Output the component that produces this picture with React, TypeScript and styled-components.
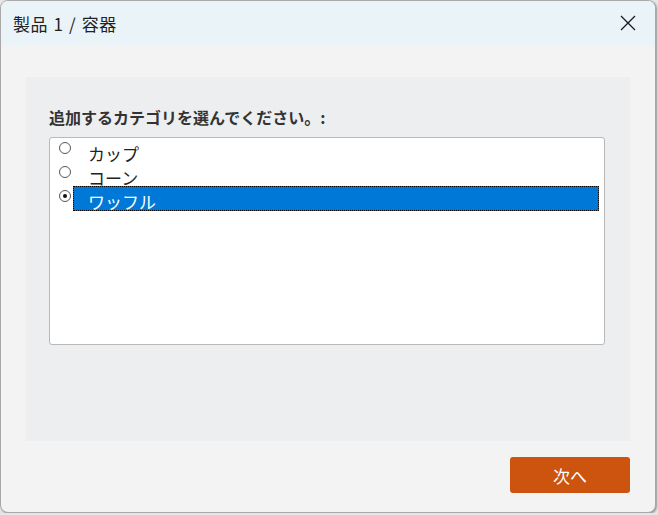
import React, { useState } from "react";
import styled, { createGlobalStyle } from "styled-components";

const Global = createGlobalStyle`
  html, body { margin: 0; padding: 0; background: #e6e6e6; }
  body { font-family: "Noto Sans CJK JP", "Noto Sans", sans-serif; }
  * { box-sizing: border-box; }
`;

const Window = styled.div`
  width: 656px;
  height: 513px;
  border: 1px solid #a8a8a8;
  border-radius: 8px;
  overflow: hidden;
  background: #f3f3f3;
  display: flex;
  flex-direction: column;
  box-shadow: 1px 1px 2px rgba(0, 0, 0, 0.35);
`;

const TitleBar = styled.div`
  height: 44px;
  flex: none;
  background: #eaf4f8;
  display: flex;
  align-items: center;
  justify-content: space-between;
  padding: 0 12px 0 12px;
`;

const Title = styled.div`
  font-size: 17px;
  color: #222;
  letter-spacing: 0.6px;
  word-spacing: 1px;
`;

const CloseButton = styled.button`
  border: none;
  background: transparent;
  padding: 0;
  width: 24px;
  height: 24px;
  display: flex;
  align-items: center;
  justify-content: center;
  margin-right: 3px;
`;

const Body = styled.div`
  flex: 1;
  display: flex;
  flex-direction: column;
  padding: 32px 25px 20px 25px;
`;

const Panel = styled.div`
  height: 364px;
  background: #eceef0;
  padding: 27px 25px 0 23px;
`;

const Label = styled.div`
  font-size: 16px;
  font-weight: bold;
  color: #333;
  line-height: 26px;
  margin-bottom: 7px;
`;

const ListBox = styled.div`
  height: 208px;
  background: #fff;
  border: 1px solid #b9b9b9;
  border-radius: 3px;
  padding: 0 5px 0 9px;
  display: flex;
  flex-direction: column;
`;

const Row = styled.div`
  display: flex;
  align-items: center;
  height: 24px;
`;

const Radio = styled.span<{ $checked: boolean }>`
  width: 12px;
  height: 12px;
  flex: none;
  border-radius: 50%;
  border: 1.5px solid #555;
  background: #fff;
  margin-top: -5px;
  display: flex;
  align-items: center;
  justify-content: center;
  &::after {
    content: "";
    width: 4px;
    height: 4px;
    border-radius: 50%;
    background: ${(p) => (p.$checked ? "#111" : "transparent")};
  }
`;

const ItemText = styled.span<{ $selected: boolean }>`
  flex: 1;
  margin-left: 2px;
  height: 25px;
  margin-top: ${(p) => (p.$selected ? "1px" : "0")};
  padding: 4px 0 0 14px;
  font-size: 17px;
  line-height: 21px;
  color: ${(p) => (p.$selected ? "#fff" : "#222")};
  background: ${(p) => (p.$selected ? "#0078d7" : "transparent")};
  border: 1px ${(p) => (p.$selected ? "dotted #ff8c00" : "solid transparent")};
  outline: ${(p) => (p.$selected ? "1px dotted #000" : "none")};
  outline-offset: -1px;
`;

const Footer = styled.div`
  display: flex;
  justify-content: flex-end;
  padding-top: 16px;
`;

const NextButton = styled.button`
  width: 120px;
  height: 36px;
  border: none;
  border-radius: 3px;
  background: #cc540e;
  color: #fff;
  font-family: "Noto Sans CJK JP", sans-serif;
  font-size: 17px;
`;

const items = ["カップ", "コーン", "ワッフル"];

export default function App() {
  const [sel, setSel] = useState(2);
  return (
    <>
      <Global />
      <Window>
        <TitleBar>
          <Title>製品 1 / 容器</Title>
          <CloseButton aria-label="close">
            <svg width="16" height="16" viewBox="0 0 16 16">
              <path d="M1 1 L15 15 M15 1 L1 15" stroke="#1a1a1a" strokeWidth="1.3" fill="none" />
            </svg>
          </CloseButton>
        </TitleBar>
        <Body>
          <Panel>
            <Label>追加するカテゴリを選んでください。:</Label>
            <ListBox>
              {items.map((t, i) => (
                <Row key={t} onClick={() => setSel(i)}>
                  <Radio $checked={sel === i} />
                  <ItemText $selected={sel === i}>{t}</ItemText>
                </Row>
              ))}
            </ListBox>
          </Panel>
          <Footer>
            <NextButton>次へ</NextButton>
          </Footer>
        </Body>
      </Window>
    </>
  );
}
